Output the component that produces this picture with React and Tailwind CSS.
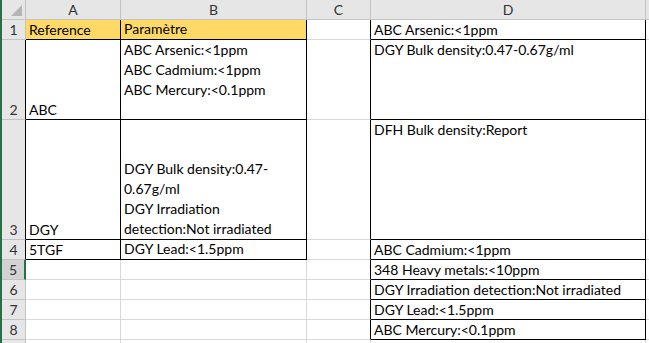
import React from "react";

const font = { fontFamily: "Lato, 'Open Sans', sans-serif" };

const rows = [
  { n: 1, h: "h-[20px]", edge: false, a: "Reference", b: ["Paramètre"], d: "ABC Arsenic:<1ppm", head: true, boxed: true },
  { n: 2, h: "h-[80px]", edge: true, a: "ABC", b: ["ABC Arsenic:<1ppm", "ABC Cadmium:<1ppm", "ABC Mercury:<0.1ppm", ""], d: "DGY Bulk density:0.47-0.67g/ml", boxed: true, top: true },
  { n: 3, h: "h-[120px]", edge: true, a: "DGY", b: ["DGY Bulk density:0.47-", "0.67g/ml", "DGY Irradiation", "detection:Not irradiated"], d: "DFH Bulk density:Report", boxed: true },
  { n: 4, h: "h-[20px]", edge: true, a: "5TGF", b: ["DGY Lead:<1.5ppm"], d: "ABC Cadmium:<1ppm", boxed: true },
  { n: 5, h: "h-[20px]", a: "", b: [], d: "348 Heavy metals:<10ppm", active: true },
  { n: 6, h: "h-[20px]", a: "", b: [], d: "DGY Irradiation detection:Not irradiated" },
  { n: 7, h: "h-[20px]", a: "", b: [], d: "DGY Lead:<1.5ppm" },
  { n: 8, h: "h-[20px]", a: "", b: [], d: "ABC Mercury:<0.1ppm" },
];

let ColHead = ({ label, w, last }) => (
  <div className={`${w} h-[20px] flex items-center justify-center border-r border-b border-[#c3c3c3] text-[#333] text-[14px]`}>
    {label}
  </div>
);

let Row = ({ r }) => {
  let bCls = r.boxed ? "border-[#000]" : "border-[#d9d9d9]";
  return (
    <div className={`flex ${r.h}`}>
      <div
        className={`w-[24px] flex items-end justify-center border-b border-[#c3c3c3] text-[14px] text-[#333] leading-[19px] ${
          r.active ? "bg-[#d2d2d2] border-r-2 border-r-[#217346] w-[24px]" : "bg-[#e6e6e6] border-r"
        } ${r.edge ? "border-r-[#000]" : ""}`}
      >
        {r.n}
      </div>
      <div className={`w-[95px] flex items-end px-[3px] border-r border-b ${bCls} ${r.head ? "bg-[#ffd966]" : ""}`}>
        <span className="leading-[19px]">{r.a}</span>
      </div>
      <div
        className={`w-[186px] flex flex-col px-[3px] border-r border-b ${bCls} ${r.head ? "bg-[#ffd966]" : ""} ${
          r.top ? "justify-start" : "justify-end"
        }`}
      >
        {r.b.map((line, i) => (
          <div key={i} className="h-[20px] leading-[20px] whitespace-nowrap">
            {line || "\u00a0"}
          </div>
        ))}
      </div>
      <div className={`w-[64px] border-r border-r-[#000] border-b border-b-[#d9d9d9]`}></div>
      <div className="w-[275px] px-[3px] border-r border-b border-[#000]">
        <div className="h-[20px] leading-[20px] whitespace-nowrap">{r.d}</div>
      </div>
      <div className="flex-1 border-b border-[#d9d9d9]"></div>
    </div>
  );
};

export default function App() {
  return (
    <div className="w-[649px] h-[343px] overflow-hidden bg-white text-[14px] text-black border-l-2 border-[#217346]" style={font}>
      <div className="flex bg-[#e6e6e6]">
        <div className="w-[24px] h-[20px] border-r border-b border-[#c3c3c3] relative">
          <div className="absolute right-[3px] bottom-[3px] w-0 h-0 border-l-[11px] border-l-transparent border-b-[11px] border-b-[#b4b4b4]"></div>
        </div>
        <ColHead label="A" w="w-[95px]" />
        <ColHead label="B" w="w-[186px]" />
        <ColHead label="C" w="w-[64px]" />
        <ColHead label="D" w="w-[275px]" />
        <div className="flex-1 h-[20px] border-b border-[#c3c3c3]"></div>
      </div>
      {rows.map((r) => (
        <Row key={r.n} r={r} />
      ))}
      <div className="flex h-[10px]">
        <div className="w-[24px] bg-[#e6e6e6] border-r border-[#c3c3c3]"></div>
        <div className="w-[95px] border-r border-[#d9d9d9]"></div>
        <div className="w-[186px] border-r border-[#d9d9d9]"></div>
        <div className="w-[64px] border-r border-[#d9d9d9]"></div>
        <div className="w-[275px] border-r border-[#d9d9d9]"></div>
      </div>
    </div>
  );
}
